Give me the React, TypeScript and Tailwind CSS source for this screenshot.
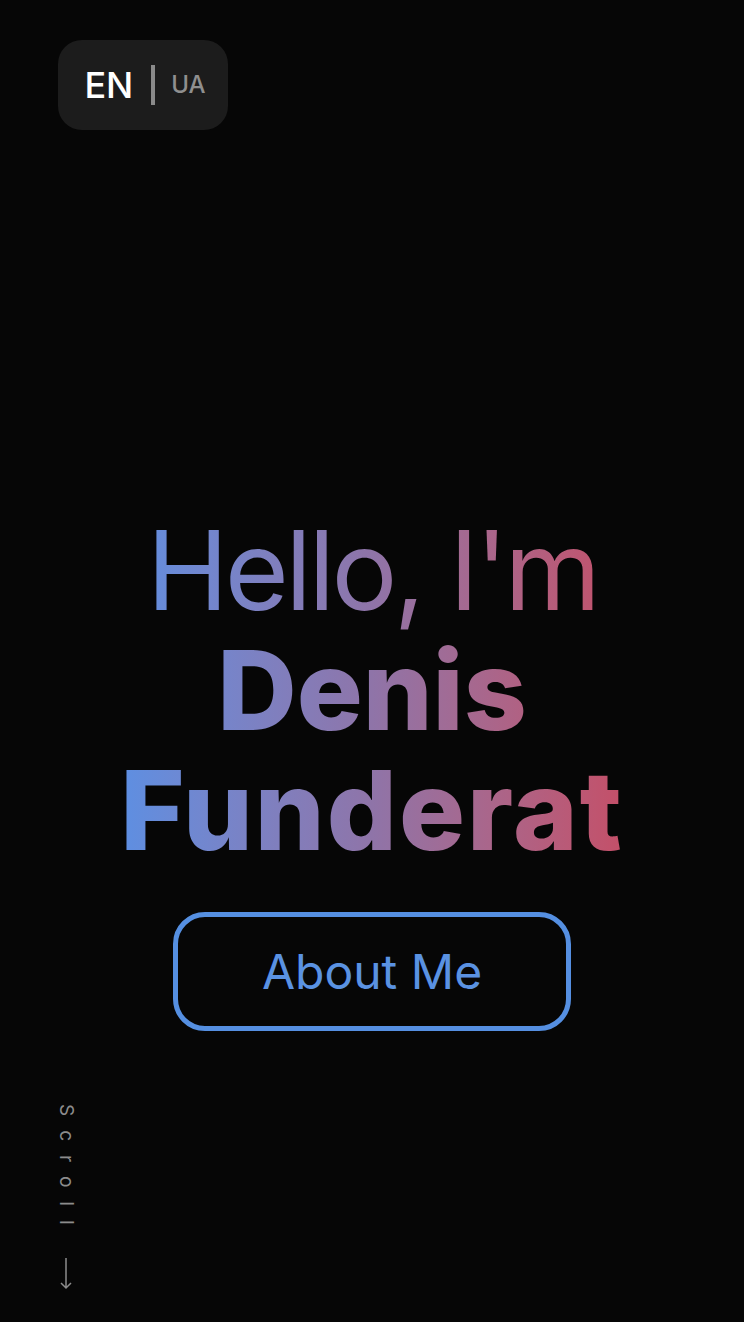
import React from 'react';

const LangSwitch: React.FC = () => (
  <div className="flex h-[90px] w-[170px] items-center justify-center rounded-[24px] bg-[#1c1c1c]">
    <span className="ml-[4px] text-[36px] font-medium leading-none text-white">EN</span>
    <span className="ml-[18px] mr-[16px] h-[40px] w-[4px] bg-[#8a8a8a]" />
    <span className="text-[24px] font-medium leading-none text-[#8f8f8f]">UA</span>
  </div>
);

const ScrollHint: React.FC = () => (
  <div className="flex w-[20px] flex-col items-center text-[#8c8c8c]">
    <span className="text-[19px] leading-none tracking-[14px] [writing-mode:vertical-rl]">Scroll</span>
    <svg className="mt-[20px]" width="12" height="32" viewBox="0 0 12 32" fill="none" stroke="currentColor" strokeWidth="1.5">
      <path d="M6 0v30M1 25l5 5 5-5" />
    </svg>
  </div>
);

export default function App() {
  return (
    <div className="flex h-[1322px] w-full flex-col bg-[#060606] font-['Inter',sans-serif]">
      <div className="pl-[58px] pt-[40px]">
        <LangSwitch />
      </div>

      <div className="flex flex-col items-center pt-[380px]">
        <h1 className="inline-block bg-gradient-to-r from-[#5d8fe2] via-[#8f74a8] to-[#c44f68] bg-clip-text text-center text-transparent">
          <span className="block text-[110px] font-normal leading-[120px] tracking-[-3.6px]">Hello, I'm</span>
          <span className="block text-[110px] font-extrabold leading-[120px] tracking-[0px]">Denis</span>
          <span className="block text-[110px] font-extrabold leading-[120px] tracking-[2px]">Funderat</span>
        </h1>
        <button className="mt-[42px] flex h-[119px] w-[398px] items-center justify-center rounded-[32px] border-[5px] border-[#558fe1] text-[48px] font-normal text-[#5a92e2]">
          About Me
        </button>
      </div>

      <div className="mt-auto pb-[32px] pl-[56px]">
        <ScrollHint />
      </div>
    </div>
  );
}
